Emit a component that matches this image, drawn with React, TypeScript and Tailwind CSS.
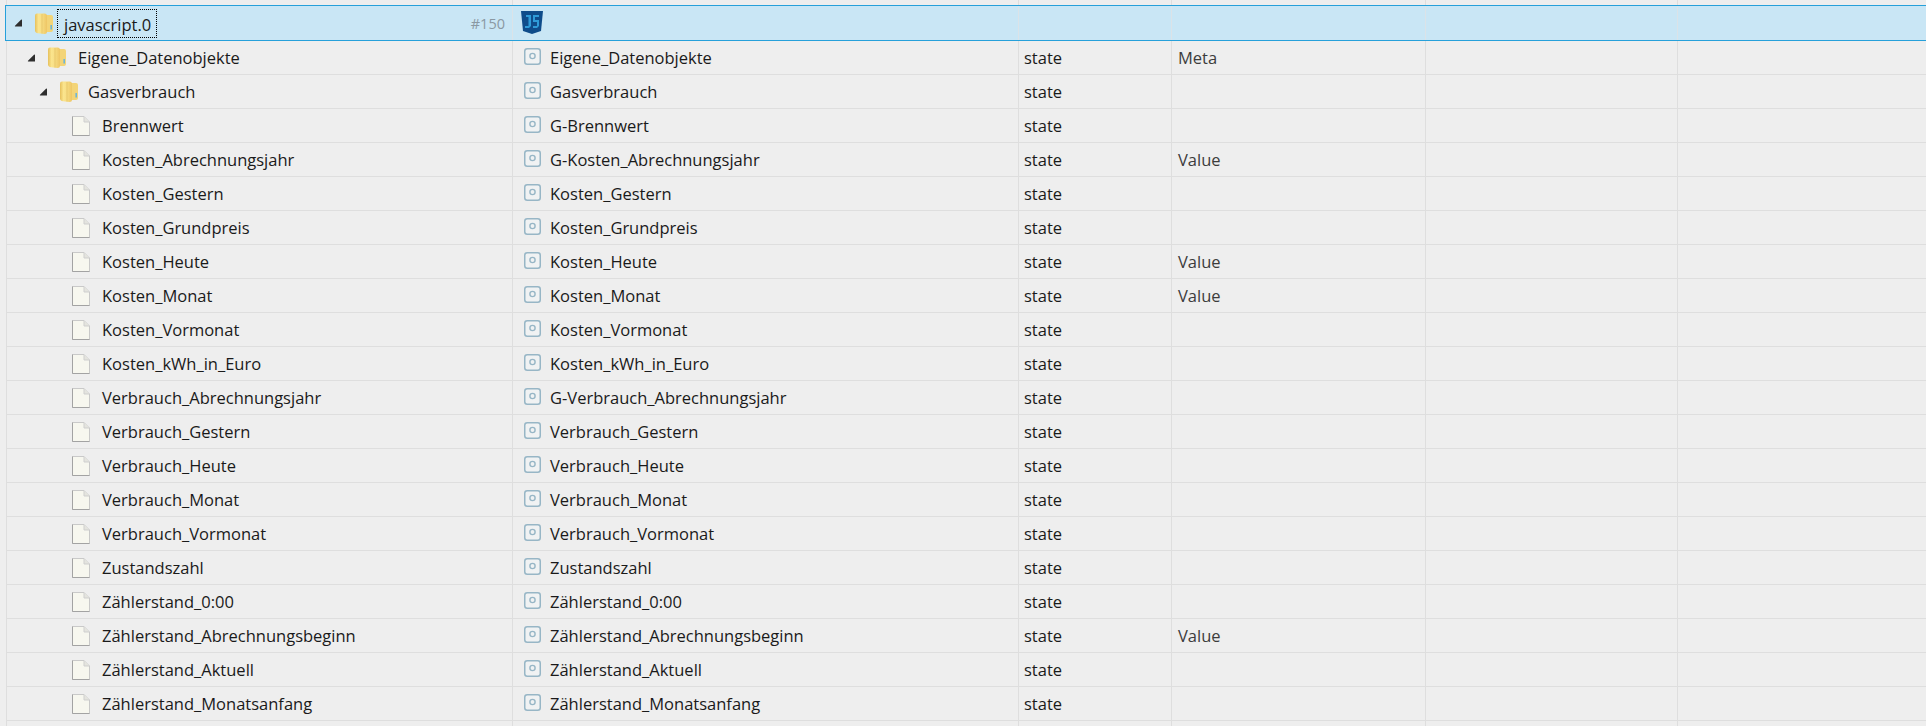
import { useId } from "react";

type Row = { name: string; title: string; role?: string };

const rows: Row[] = [
  { name: "Brennwert", title: "G-Brennwert" },
  { name: "Kosten_Abrechnungsjahr", title: "G-Kosten_Abrechnungsjahr", role: "Value" },
  { name: "Kosten_Gestern", title: "Kosten_Gestern" },
  { name: "Kosten_Grundpreis", title: "Kosten_Grundpreis" },
  { name: "Kosten_Heute", title: "Kosten_Heute", role: "Value" },
  { name: "Kosten_Monat", title: "Kosten_Monat", role: "Value" },
  { name: "Kosten_Vormonat", title: "Kosten_Vormonat" },
  { name: "Kosten_kWh_in_Euro", title: "Kosten_kWh_in_Euro" },
  { name: "Verbrauch_Abrechnungsjahr", title: "G-Verbrauch_Abrechnungsjahr" },
  { name: "Verbrauch_Gestern", title: "Verbrauch_Gestern" },
  { name: "Verbrauch_Heute", title: "Verbrauch_Heute" },
  { name: "Verbrauch_Monat", title: "Verbrauch_Monat" },
  { name: "Verbrauch_Vormonat", title: "Verbrauch_Vormonat" },
  { name: "Zustandszahl", title: "Zustandszahl" },
  { name: "Zählerstand_0:00", title: "Zählerstand_0:00" },
  { name: "Zählerstand_Abrechnungsbeginn", title: "Zählerstand_Abrechnungsbeginn", role: "Value" },
  { name: "Zählerstand_Aktuell", title: "Zählerstand_Aktuell" },
  { name: "Zählerstand_Monatsanfang", title: "Zählerstand_Monatsanfang" },
];

function Arrow() {
  return (
    <svg width="9" height="8" viewBox="0 0 9 8" className="shrink-0">
      <path d="M8 1V7.5H1.2Q0.5 7.5 1 6.8L7 0.8Q8 0 8 1Z" fill="#2e2e2e" />
    </svg>
  );
}

function Folder() {
  const id = useId();
  return (
    <svg width="18" height="21" viewBox="0 0 18 21" className="shrink-0">
      <defs>
        <linearGradient id={id} x1="0" y1="0" x2="1" y2="0">
          <stop offset="0" stopColor="#e6c05c" />
          <stop offset="0.3" stopColor="#fbe58e" />
          <stop offset="0.55" stopColor="#f7de85" />
          <stop offset="1" stopColor="#eec665" />
        </linearGradient>
      </defs>
      <path d="M10 2H16Q18 2 18 4V17Q18 19 16 19H10Z" fill="#f3d477" />
      <path d="M0 2.5Q0 0.5 2 0.5H9.5Q12 0.5 12 3V18.5Q12 21 9.5 21L3 20.2Q0 19.8 0 17.5Z" fill={`url(#${id})`} />
      <path d="M7 1V20.5" stroke="#e8c76a" strokeWidth="1" />
      <rect x="15.4" y="12" width="1.6" height="4.5" fill="#6fb6d6" />
    </svg>
  );
}

function FileIcon() {
  return (
    <svg width="18" height="20" viewBox="0 0 18 20" className="shrink-0">
      <path d="M0.5 0.5H12L17.5 6V19.5H0.5Z" fill="#f7f7ef" stroke="#c9c9c9" />
      <path d="M0.5 0.5V19.5H17.5" fill="none" stroke="#a3a3a3" />
      <path d="M12 0.5V6H17.5" fill="#e4e4de" stroke="#cfcfcf" />
    </svg>
  );
}

function StateIcon() {
  return (
    <svg width="17" height="17" viewBox="0 0 17 17" className="shrink-0 -mt-[3px]">
      <rect x="0.75" y="0.75" width="15.5" height="15.5" rx="2.5" fill="#f0f2f3" stroke="#97b6c6" strokeWidth="1.5" />
      <circle cx="8.5" cy="8" r="2.6" fill="none" stroke="#97b6c6" strokeWidth="1.4" />
    </svg>
  );
}

function JsIcon() {
  return (
    <svg width="22" height="23" viewBox="0 0 22 23" className="shrink-0 -mt-[1px]">
      <path d="M0 0H22L20 20L11 23L2 20Z" fill="#0f4c8a" />
      <path d="M5 4H10V15L8 17H4V15H7.5V6H5Z" fill="#2f9bd8" />
      <path d="M12 4H18V6H14V9H18V15L16 17H12V15H16V11H12Z" fill="#2f9bd8" />
    </svg>
  );
}

function Cells({ title, role }: { title?: string; role?: string }) {
  const line = "h-full flex items-center border-l border-[#dedede]";
  return (
    <>
      <div className={`w-[506px] shrink-0 gap-[9px] pl-[11px] ${line}`}>
        {title && <StateIcon />}
        {title && <span className="pt-[2px]">{title}</span>}
      </div>
      <div className={`w-[153px] shrink-0 pl-[5px] ${line}`}>
        {title && <span className="pt-[2px]">state</span>}
      </div>
      <div className={`w-[254px] shrink-0 pl-[6px] text-[#3c3c3c] ${line}`}>
        {role && <span className="pt-[2px]">{role}</span>}
      </div>
      <div className={`w-[252px] shrink-0 ${line}`} />
      <div className={`flex-1 ${line}`} />
    </>
  );
}

export default function App() {
  return (
    <div className="w-[1926px] h-[726px] overflow-hidden bg-[#eeeeee] font-['Open_Sans',sans-serif] text-[16.5px] text-[#1a1a1a] flex flex-col">
      {/* strip above the selected row */}
      <div className="h-[5px] shrink-0 flex pl-[6px]">
        <div className="w-[506px] shrink-0 border-l border-[#dedede]" />
        <Cells />
      </div>

      {/* selected adapter row */}
      <div className="h-[36px] shrink-0 ml-[5px] flex bg-[#c9e6f5] border border-[#26a0da] border-r-0">
        <div className="w-[506px] shrink-0 flex items-center pl-[8px]">
          <Arrow />
          <div className="ml-[12px]"><Folder /></div>
          <span className="ml-[4px] px-[6px] w-[100px] whitespace-nowrap h-[29px] leading-[29px] border border-dotted border-black">javascript.0</span>
          <span className="ml-auto mr-[7px] pt-[2px] text-[#8a98a2] text-[14.5px]">#150</span>
        </div>
        <div className="w-[506px] shrink-0 flex items-center pl-[8px] border-l border-[#dbe3e8]">
          <JsIcon />
        </div>
        <div className="w-[153px] shrink-0 border-l border-[#dbe3e8]" />
        <div className="w-[254px] shrink-0 border-l border-[#dbe3e8]" />
        <div className="w-[252px] shrink-0 border-l border-[#dbe3e8]" />
        <div className="flex-1 border-l border-[#dbe3e8]" />
      </div>

      {/* tree rows */}
      <div className="pl-[6px] flex flex-col">
        <div className="h-[34px] shrink-0 flex items-center border-b border-[#dedede]">
          <div className="w-[506px] h-full shrink-0 flex items-center pl-[20px] border-l border-[#dedede]">
            <Arrow />
            <div className="ml-[12px]"><Folder /></div>
            <span className="ml-[12px] pt-[2px]">Eigene_Datenobjekte</span>
          </div>
          <Cells title="Eigene_Datenobjekte" role="Meta" />
        </div>
        <div className="h-[34px] shrink-0 flex items-center border-b border-[#dedede]">
          <div className="w-[506px] h-full shrink-0 flex items-center pl-[32px] border-l border-[#dedede]">
            <Arrow />
            <div className="ml-[12px]"><Folder /></div>
            <span className="ml-[10px] pt-[2px]">Gasverbrauch</span>
          </div>
          <Cells title="Gasverbrauch" />
        </div>
        {rows.map((r) => (
          <div key={r.name} className="h-[34px] shrink-0 flex items-center border-b border-[#dedede]">
            <div className="w-[506px] h-full shrink-0 flex items-center pl-[65px] border-l border-[#dedede]">
              <FileIcon />
              <span className="ml-[12px] pt-[2px]">{r.name}</span>
            </div>
            <Cells title={r.title} role={r.role} />
          </div>
        ))}
        <div className="h-[6px] shrink-0 flex">
          <div className="w-[506px] shrink-0 border-l border-[#dedede]" />
          <Cells />
        </div>
      </div>
    </div>
  );
}
